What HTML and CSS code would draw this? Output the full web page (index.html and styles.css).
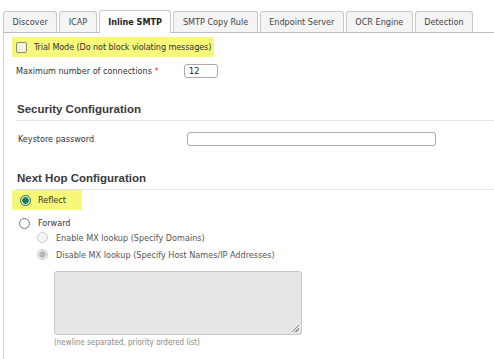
FILE: index.html
```html
<!DOCTYPE html>
<html lang="en">
<head>
    <meta charset="UTF-8">
    <title>Inline SMTP</title>
    <link rel="stylesheet" href="styles.css">
</head>
<body>
<div class="tabs">
    <div class="tab">Discover</div>
    <div class="tab">ICAP</div>
    <div class="tab active">Inline SMTP</div>
    <div class="tab">SMTP Copy Rule</div>
    <div class="tab">Endpoint Server</div>
    <div class="tab">OCR Engine</div>
    <div class="tab">Detection</div>
</div>
<div class="panel">
    <label class="mark trial">
        <span class="check"></span>
        Trial Mode (Do not block violating messages)
    </label>
    <div class="field conn">
        <span class="label">Maximum number of connections <span class="req">*</span></span>
        <span class="box small">12</span>
    </div>

    <h2>Security Configuration</h2>
    <div class="field keystore">
        <span class="label">Keystore password</span>
        <span class="box wide"></span>
    </div>

    <h2 class="hop">Next Hop Configuration</h2>
    <div class="radios">
        <label class="mark reflect"><span class="radio on"></span>Reflect</label>
        <label class="opt forward"><span class="radio"></span>Forward</label>
        <div class="sub">
            <label class="opt dim enable"><span class="radio off"></span>Enable MX lookup (Specify Domains)</label>
            <label class="opt dim disable"><span class="radio off sel"></span>Disable MX lookup (Specify Host Names/IP Addresses)</label>
            <div class="area"><span class="grip"></span></div>
            <div class="hint">(newline separated, priority ordered list)</div>
        </div>
    </div>
</div>
</body>
</html>
```

FILE: styles.css
```css
/* Общие стили */
body { font-family: "DejaVu Sans Condensed", "DejaVu Sans", sans-serif; font-size: 9px; color: #333; margin: 0; padding: 0; background-color: #fff; }

/* Вкладки */
.tabs {
    display: flex;
    align-items: flex-end;
    gap: 2px;
    padding: 10px 0 0 3px;
    height: 22px;
}

.tab {
    height: 20px;
    line-height: 20px;
    padding: 0 8.5px;
    border: 1px solid #c8c8c8;
    border-bottom: none;
    border-radius: 3px 3px 0 0;
    background-color: #f4f4f4;
    color: #444;
    white-space: nowrap;
}

.tab.active {
    height: 22px;
    line-height: 22px;
    background-color: #fff;
    color: #222;
    font-weight: bold;
    margin-bottom: -1px;
    position: relative;
}

/* Панель */
.panel {
    margin-left: 3px;
    border-top: 1px solid #bdbdbd;
    border-left: 1px solid #cfcfcf;
    border-bottom: 2px solid #cfcfcf;
    height: 322px;
    padding: 4px 0 0 8px;
}

.mark {
    display: inline-flex;
    align-items: center;
    background-color: #f7f77a;
    height: 20px;
    white-space: nowrap;
}

.trial {
    padding: 0 3px 0 4px;
    gap: 7px;
    color: #333;
    letter-spacing: -0.1px;
}

.check {
    width: 9px;
    height: 9px;
    border: 1px solid #8a8a7a;
    border-radius: 2px;
    background-color: #f4f4d8;
}

.field {
    display: flex;
    align-items: center;
}

.conn {
    margin-top: 7px;
    padding-left: 4px;
}

.conn .label { width: 168px; }

.req { color: #d33; }

.box {
    display: inline-block;
    height: 12px;
    line-height: 12px;
    border: 1px solid #aaa;
    border-radius: 3px;
    padding-left: 4px;
    box-sizing: content-box;
    color: #222;
}

.box.small { width: 28px; }

.box.wide { width: 243px; }

h2 {
    font-family: "Liberation Sans", Arial, sans-serif;
    font-size: 11.5px;
    font-weight: bold;
    color: #3a3a3a;
    margin: 25px 0 0 4px;
    padding: 0 0 5px 1px;
    border-bottom: 1px solid #dde4ee;
}

h2.hop { margin-top: 26px; }

.keystore {
    margin-top: 11px;
    padding-left: 6px;
}

.keystore .label { width: 169px; }

.reflect {
    padding: 0 10px 0 8px;
    gap: 7px;
    width: 70px;
    box-sizing: border-box;
}

.radio {
    width: 9px;
    height: 9px;
    border: 1px solid #777;
    border-radius: 50%;
    background-color: #fff;
    display: inline-block;
    flex: none;
}

.radio.on {
    border-color: #2e6b4e;
    background: radial-gradient(circle, #1f7a52 0 3px, #d9eee3 3.5px);
}

.radio.off {
    border-color: #ccc;
    background-color: #f6f6f6;
}

.radio.sel {
    background: radial-gradient(circle, #b8b8b8 0 3px, #eee 3.5px);
}

.opt {
    display: flex;
    align-items: center;
    gap: 8px;
    padding-left: 7px;
}

.forward {
    margin-top: 5px;
    height: 16px;
}

.opt.dim { color: #555; }

.sub {
    padding-left: 18px;
}

.sub .opt { padding-left: 7px; }

.enable { height: 13px; }

.disable { height: 21px; }

.area {
    margin: 6px 0 0 24px;
    width: 246px;
    height: 62px;
    background-color: #e6e6e6;
    border: 1px solid #c8c8c8;
    border-radius: 3px;
    position: relative;
}

.grip {
    position: absolute;
    right: 2px;
    bottom: 2px;
    width: 7px;
    height: 7px;
    background: linear-gradient(135deg, transparent 45%, #888 45% 55%, transparent 55% 70%, #888 70% 80%, transparent 80%);
}

.hint {
    margin: 3px 0 0 24px;
    font-size: 8px;
    color: #888;
}
```
